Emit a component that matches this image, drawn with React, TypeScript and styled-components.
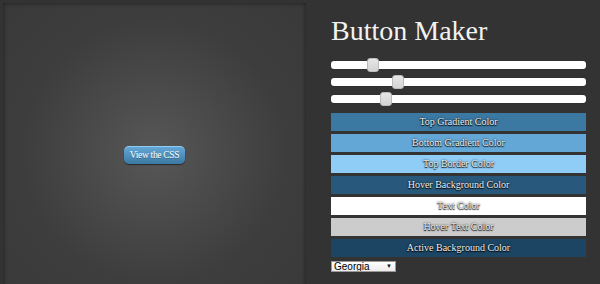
import React, { useState } from "react";
import styled, { createGlobalStyle } from "styled-components";

const GlobalStyle = createGlobalStyle`
  html, body {
    margin: 0;
    padding: 0;
    background: #333333;
    font-family: "Liberation Serif", "Times New Roman", serif;
  }
`;

const swatches = [
  { label: "Top Gradient Color", bg: "#3b78a2" },
  { label: "Bottom Gradient Color", bg: "#63a7d6" },
  { label: "Top Border Color", bg: "#8fcdf6" },
  { label: "Hover Background Color", bg: "#28597c" },
  { label: "Text Color", bg: "#ffffff" },
  { label: "Hover Text Color", bg: "#cccccc" },
  { label: "Active Background Color", bg: "#1c4563" },
];

const App = () => {
  const [values, setValues] = useState([15, 25, 20]);

  const setValue = (i: number, v: number) => {
    const next = [...values];
    next[i] = v;
    setValues(next);
  };

  return (
    <Page>
      <GlobalStyle />
      <Preview>
        <CssButton>View the CSS</CssButton>
      </Preview>
      <Controls>
        <Title>Button Maker</Title>
        <Sliders>
          {values.map((v, i) => (
            <Slider
              key={i}
              type='range'
              min={0}
              max={100}
              value={v}
              onChange={(e) => setValue(i, Number(e.target.value))}
            />
          ))}
        </Sliders>
        <Swatches>
          {swatches.map((s) => (
            <Swatch key={s.label} $bg={s.bg}>
              {s.label}
            </Swatch>
          ))}
        </Swatches>
        <SelectWrap>
          <FontSelect defaultValue='Georgia'>
            <option>Georgia</option>
            <option>Arial</option>
            <option>Verdana</option>
          </FontSelect>
        </SelectWrap>
      </Controls>
    </Page>
  );
};

export default App;

const Page = styled.div`
  display: flex;
  align-items: flex-start;
  width: 600px;
  height: 284px;
  overflow: hidden;
`;

const Preview = styled.div`
  flex: 0 0 303px;
  height: 310px;
  margin: 3px 0 0 3px;
  display: flex;
  align-items: center;
  justify-content: center;
  padding-bottom: 7px;
  box-sizing: border-box;
  background: radial-gradient(
    circle at 50% 48%,
    #575757 0%,
    #4a4a4a 30%,
    #3d3d3d 60%,
    #393939 100%
  );
  box-shadow: inset 0 0 4px rgba(0, 0, 0, 0.55);
`;

const CssButton = styled.a`
  display: inline-block;
  padding: 2px 6px 3px;
  border-top: 1px solid #8fcdf6;
  border-radius: 5px;
  background: linear-gradient(#63a7d6, #3b78a2);
  box-shadow: 0 1px 1px rgba(0, 0, 0, 0.5);
  color: #ffffff;
  font-family: "Liberation Serif", serif;
  font-size: 9.5px;
  letter-spacing: -0.3px;
  line-height: 12px;
  text-shadow: 0 1px 0 rgba(0, 0, 0, 0.3);
  cursor: pointer;
`;

const Controls = styled.div`
  flex: 0 0 255px;
  margin-left: 25px;
  display: flex;
  flex-direction: column;
`;

const Title = styled.h1`
  margin: 15px 0 14px;
  color: #f2f2f2;
  font-weight: normal;
  font-size: 28px;
  line-height: 32px;
  font-family: "Liberation Serif", serif;
`;

const Sliders = styled.div`
  display: flex;
  flex-direction: column;
  gap: 9px;
`;

const Slider = styled.input`
  -webkit-appearance: none;
  appearance: none;
  width: 255px;
  height: 8px;
  margin: 0;
  border-radius: 3px;
  background: #ffffff;
  box-shadow: 0 0 1px rgba(0, 0, 0, 0.6);
  outline: none;

  &::-webkit-slider-thumb {
    -webkit-appearance: none;
    width: 12px;
    height: 14px;
    border-radius: 3px;
    background: linear-gradient(#e6e6e6, #d4d4d4);
    border: 1px solid #bcbcbc;
    box-sizing: border-box;
  }
`;

const Swatches = styled.div`
  margin-top: 10px;
  display: flex;
  flex-direction: column;
  gap: 3px;
`;

const Swatch = styled.div<{ $bg: string }>`
  height: 18px;
  line-height: 18px;
  background: ${(p) => p.$bg};
  color: #f0f0f0;
  text-align: center;
  font-size: 10px;
  font-family: "Liberation Serif", serif;
  text-shadow: 0 0 2px #000, 0 1px 1px #000;
  cursor: pointer;
`;

const SelectWrap = styled.div`
  position: relative;
  margin-top: 4px;
  width: 65px;
  height: 11px;

  &::after {
    content: "▼";
    position: absolute;
    right: 4px;
    top: 2px;
    font-size: 6px;
    line-height: 7px;
    color: #111;
    pointer-events: none;
  }
`;

const FontSelect = styled.select`
  -webkit-appearance: none;
  appearance: none;
  display: block;
  width: 65px;
  height: 11px;
  margin: 0;
  padding: 0 0 0 2px;
  font-size: 10px;
  line-height: 9px;
  font-family: "Liberation Sans", Arial, sans-serif;
  border: 1px solid #999;
  border-radius: 0;
  background: linear-gradient(#ffffff, #ececec);
  color: #000;
  box-sizing: border-box;
  outline: none;
`;
